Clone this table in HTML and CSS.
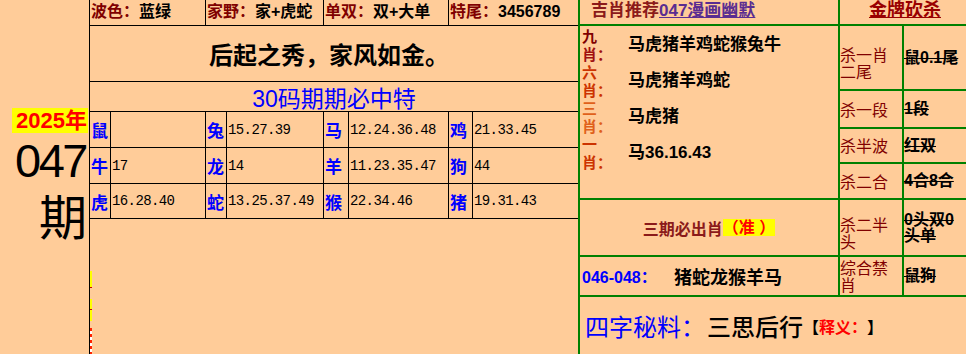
FILE: index.html
```html
<!DOCTYPE html>
<html lang="zh">
<head>
<meta charset="utf-8">
<title>047期</title>
<link rel="stylesheet" href="styles.css">
</head>
<body>
<div class="page">
  <div class="leftcol">
    <div class="year"><span class="year-box">2025年</span></div>
    <div class="issue">047</div>
    <div class="qi">期</div>
  </div>

  <div class="mid">
    <div class="toprow">
      <div class="tcell"><span class="lbl">波色：</span>蓝绿</div>
      <div class="tcell"><span class="lbl">家野：</span>家+虎蛇</div>
      <div class="tcell"><span class="lbl">单双：</span>双+大单</div>
      <div class="tcell"><span class="lbl">特尾：</span>3456789</div>
    </div>
    <div class="motto">后起之秀，家风如金。</div>
    <div class="title30">30码期期必中特</div>
    <div class="zrow">
      <div class="zc">鼠</div><div class="zn"></div>
      <div class="zc">兔</div><div class="zn">15.27.39</div>
      <div class="zc">马</div><div class="zn">12.24.36.48</div>
      <div class="zc">鸡</div><div class="zn">21.33.45</div>
    </div>
    <div class="zrow">
      <div class="zc">牛</div><div class="zn">17</div>
      <div class="zc">龙</div><div class="zn">14</div>
      <div class="zc">羊</div><div class="zn">11.23.35.47</div>
      <div class="zc">狗</div><div class="zn">44</div>
    </div>
    <div class="zrow last">
      <div class="zc">虎</div><div class="zn">16.28.40</div>
      <div class="zc">蛇</div><div class="zn">13.25.37.49</div>
      <div class="zc">猴</div><div class="zn">22.34.46</div>
      <div class="zc">猪</div><div class="zn">19.31.43</div>
    </div>
    <div class="marks">
      <div class="mark m1"></div>
      <div class="mark m2"></div>
      <div class="mark m3"></div>
    </div>
  </div>

  <div class="right">
    <div class="cell hdr-left"><span class="jx">吉肖推荐</span><span class="link">047漫画幽默</span></div>
    <div class="cell hdr-right"><span class="gold">金牌砍杀</span></div>

    <div class="cell picks">
      <div class="plabel c1"><span class="dark">九</span><br>肖：</div>
      <div class="pval">马虎猪羊鸡蛇猴兔牛</div>
      <div class="plabel c2">六<br>肖：</div>
      <div class="pval">马虎猪羊鸡蛇</div>
      <div class="plabel c3">三<br>肖：</div>
      <div class="pval">马虎猪</div>
      <div class="plabel c2">一<br>肖：</div>
      <div class="pval">马36.16.43</div>
    </div>

    <div class="cell klabel low">杀一肖二尾</div>
    <div class="cell kval">鼠0.1尾</div>
    <div class="cell klabel">杀一段</div>
    <div class="cell kval">1段</div>
    <div class="cell klabel">杀半波</div>
    <div class="cell kval">红双</div>
    <div class="cell klabel">杀二合</div>
    <div class="cell kval">4合8合</div>

    <div class="cell must">三期必出肖<span class="zhun">（准 ）</span></div>
    <div class="cell klabel low">杀二半头</div>
    <div class="cell kval">0头双0头单</div>

    <div class="cell range"><span class="rnum">046-048：</span><span class="rz">猪蛇龙猴羊马</span></div>
    <div class="cell klabel">综合禁肖</div>
    <div class="cell kval">鼠狗</div>

    <div class="cell secret">
      <span class="sk">四字秘料：</span><span class="sv">三思后行</span><span class="br">【</span><span class="sy">释义：</span><span class="br">】</span>
    </div>
  </div>
</div>
</body>
</html>
```

FILE: styles.css
```css
* { box-sizing: border-box; }

html, body {
  margin: 0;
  padding: 0;
  background: #FFCC99;
}

body {
  font-family: "Liberation Sans", "Noto Sans CJK SC", sans-serif;
  color: #000;
  width: 966px;
  height: 354px;
  overflow: hidden;
}

.page {
  display: flex;
  height: 354px;
}

/* left column */
.leftcol {
  width: 89px;
  padding-top: 108px;
  padding-right: 1px;
  text-align: right;
}

.year {
  height: 25px;
}

.year-box {
  display: inline-block;
  background: #FFFF00;
  color: #FF0000;
  font-weight: bold;
  font-size: 22px;
  line-height: 25px;
  height: 25px;
  width: 76px;
  text-align: right;
  padding-right: 1px;
}

.issue {
  margin-top: 4px;
  font-size: 47px;
  line-height: 47px;
  letter-spacing: -2.5px;
  padding-right: 2px;
}

.qi {
  margin-top: 6px;
  font-family: "Noto Sans CJK SC", sans-serif;
  font-size: 48px;
  line-height: 48px;
  padding-right: 1px;
}

/* middle panel */
.mid {
  width: 489px;
  border-left: 1px solid #000;
}

.toprow {
  display: grid;
  grid-template-columns: 115px 118px 125px 130px;
  height: 26px;
  border-bottom: 1px solid #000;
}

.tcell {
  font-size: 16px;
  font-weight: bold;
  line-height: 24px;
  padding-left: 1px;
  white-space: nowrap;
}

.tcell + .tcell {
  border-left: 1px solid #000;
}

.lbl {
  color: #800000;
}

.motto {
  height: 56px;
  border-bottom: 1px solid #000;
  display: flex;
  align-items: center;
  justify-content: center;
  font-size: 24px;
  font-weight: bold;
  padding-right: 10px;
}

.title30 {
  height: 30px;
  border-bottom: 1px solid #000;
  display: flex;
  align-items: center;
  justify-content: center;
  color: #0000FF;
  font-size: 23px;
  padding-top: 1px;
}

.zrow {
  display: grid;
  grid-template-columns: 20px 95px 21px 97px 25px 100px 24px 106px;
  height: 36px;
  border-bottom: 1px solid #000;
}

.zrow.last {
  height: 35px;
}

.zc, .zn {
  display: flex;
  align-items: center;
}

.zn, .zc + .zn + .zc {
  border-left: 1px solid #000;
}

.zc {
  color: #0000FF;
  font-weight: bold;
  font-size: 17px;
  padding-left: 1px;
  font-family: "Noto Sans CJK SC", sans-serif;
}

.zn {
  font-family: "Liberation Mono", monospace;
  font-size: 14px;
  letter-spacing: -0.6px;
  padding-left: 1px;
}

.marks {
  padding-top: 52px;
}

.mark {
  width: 2px;
}

.m1 {
  height: 17px;
  background: #FFFF00;
  border-bottom: 1px solid #CC0000;
}

.m2 {
  margin-top: 11px;
  height: 22px;
  background: linear-gradient(#FFFF00 0 45%, #CC0000 45% 52%, #FFFF00 52% 100%);
}

.m3 {
  margin-top: 7px;
  height: 26px;
  background: repeating-linear-gradient(#FF2200 0 3px, #FFFFFF 3px 6px);
}

/* right panel */
.right {
  width: 388px;
  background: #008000;
  padding-left: 2px;
  display: grid;
  grid-template-columns: 258px 62px 62px;
  grid-template-rows: 24px 63px 36px 33px 34px 55px 38px 57px;
  gap: 2px;
}

.cell {
  background: #FFCC99;
}

.hdr-left {
  padding-left: 11px;
  font-size: 17px;
  font-weight: bold;
  line-height: 22px;
  white-space: nowrap;
}

.jx {
  color: #8B1A1A;
}

.link {
  color: #5A2D91;
  text-decoration: underline;
}

.hdr-right {
  grid-column: 2 / 4;
  text-align: center;
  line-height: 20px;
  padding-left: 4px;
}

.gold {
  color: #990000;
  font-weight: bold;
  font-size: 18px;
  text-decoration: underline;
}

.picks {
  grid-row: span 4;
  display: grid;
  grid-template-columns: 48px 1fr;
  grid-auto-rows: 36px;
  align-content: start;
  padding-top: 1px;
}

.plabel {
  font-size: 15px;
  line-height: 18px;
  font-weight: bold;
  padding-left: 2px;
  white-space: nowrap;
  font-family: "Noto Sans CJK SC", sans-serif;
}

.plabel.c1 { color: #A01010; }
.plabel.c1 .dark { color: #800000; }
.plabel.c2 { color: #CC3300; }
.plabel.c3 { color: #E0601A; }

.pval {
  align-self: center;
  font-size: 17px;
  font-weight: bold;
  line-height: 20px;
  white-space: nowrap;
}

.klabel {
  display: flex;
  align-items: center;
  color: #800000;
  font-size: 16px;
  line-height: 17px;
  font-family: "Noto Sans CJK SC", sans-serif;
}

.klabel.low {
  padding-top: 10px;
}

.kval {
  display: flex;
  align-items: center;
  font-size: 16px;
  font-weight: bold;
  line-height: 16px;
  text-decoration: line-through;
  text-decoration-thickness: 1px;
}

.must {
  display: flex;
  align-items: center;
  justify-content: center;
  font-size: 16px;
  font-weight: bold;
  color: #8B1A1A;
}

.zhun {
  background: #FFFF00;
  color: #FF0000;
  line-height: 17px;
}

.range {
  display: flex;
  align-items: center;
  padding-left: 2px;
  font-weight: bold;
  white-space: nowrap;
}

.rnum {
  color: #0000FF;
  font-size: 16px;
  width: 92px;
}

.rz {
  font-size: 18px;
}

.secret {
  grid-column: 1 / 4;
  display: flex;
  align-items: center;
  padding-left: 5px;
  white-space: nowrap;
}

.sk {
  color: #0000FF;
  font-size: 24px;
}

.sv {
  font-size: 24px;
  font-weight: 500;
  margin-left: 2px;
}

.br {
  font-size: 16px;
  font-weight: bold;
}

.sy {
  font-size: 16px;
  font-weight: bold;
  color: #FF0000;
}
```
